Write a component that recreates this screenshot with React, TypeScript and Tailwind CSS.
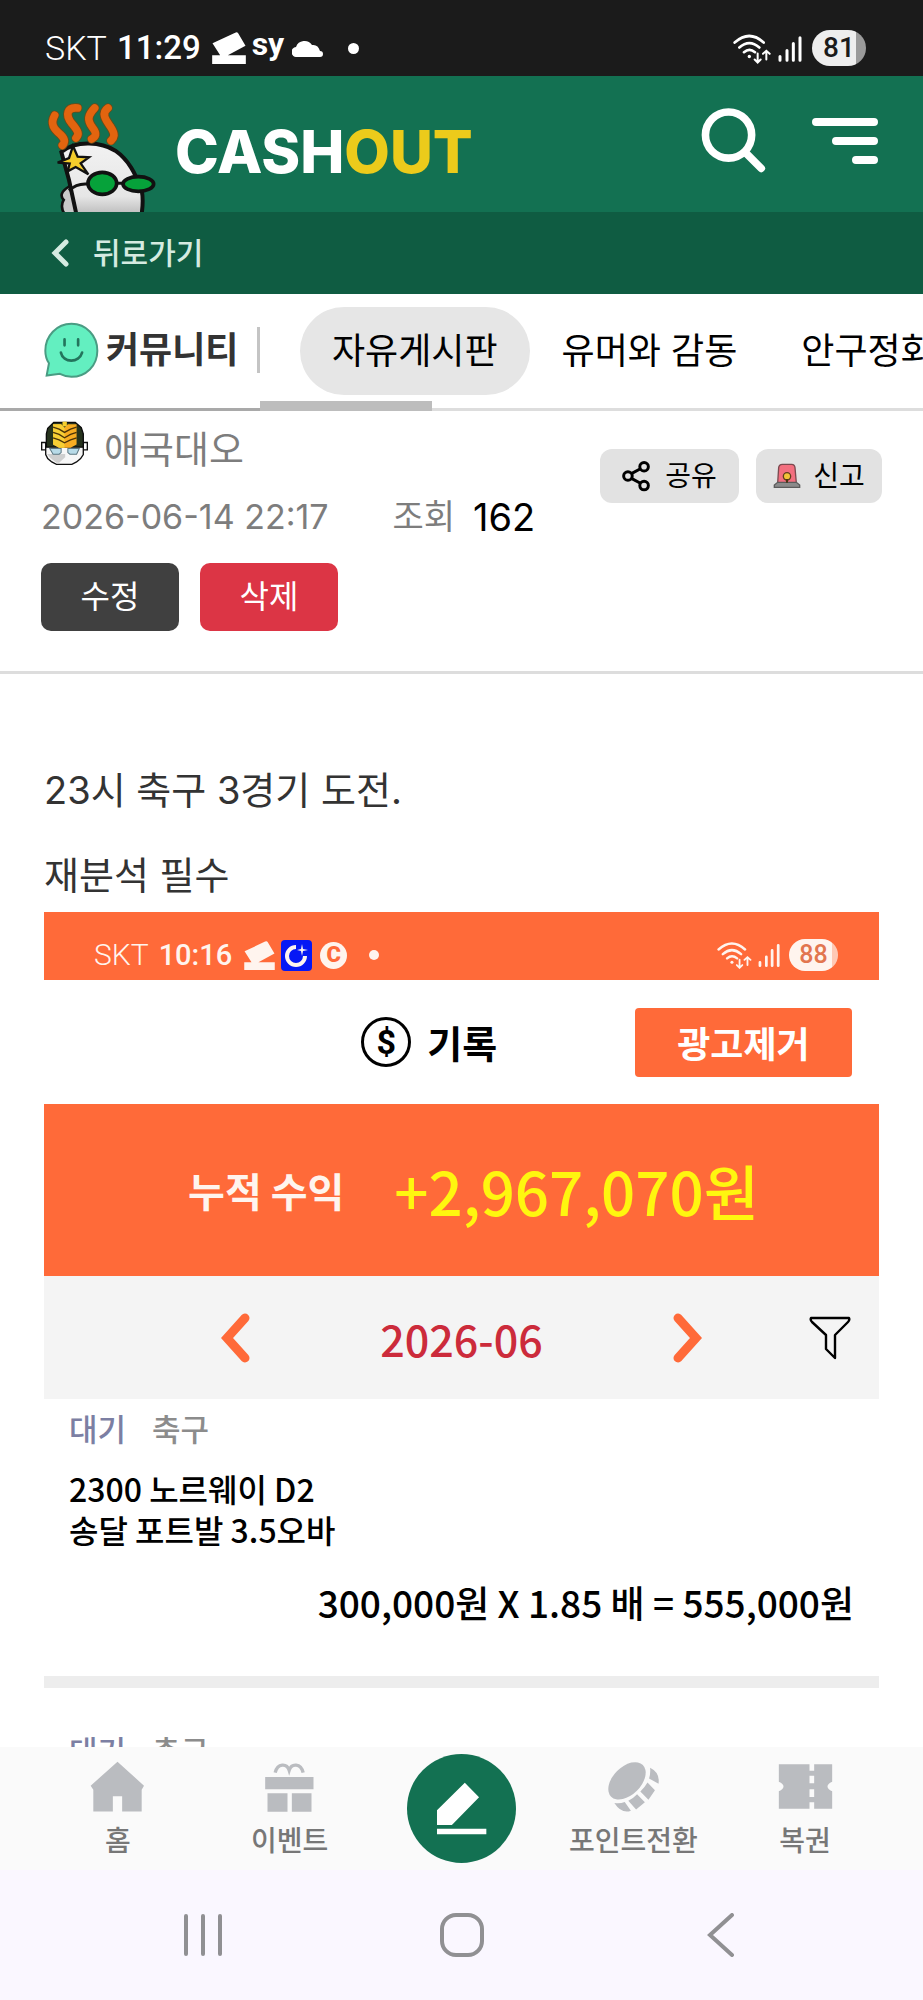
import type { ReactNode } from "react";
import { clsx } from "clsx";

const boards = ["자유게시판", "유머와 감동", "안구정화"];

const records = [
  {
    id: 1,
    status: "대기",
    sport: "축구",
    lines: ["2300 노르웨이 D2", "송달 포트발 3.5오바"],
    result: "300,000원 X 1.85 배 = 555,000원"
  },
  { id: 2, status: "대기", sport: "축구", lines: [], result: "" }
];

function CardIcon({ className }: { className?: string }) {
  return (
    <svg viewBox="636 96 101 96" className={className} fill="currentColor" aria-hidden="true">
      <path d="M637 130 L705 98 Q711 95 714 100 L736 137 L683 166 H737 V192 H636 V166 H660 Z" />
    </svg>
  );
}

function SignalIcons({ className }: { className?: string }) {
  return (
    <svg viewBox="760 95 210 92" className={className} fill="none" stroke="currentColor" strokeLinecap="round" aria-hidden="true">
      <path d="M765 123 Q809 84 852 123 M779 138 Q809 112 839 138 M793 152 Q809 138 826 152" strokeWidth="8" />
      <circle cx="809" cy="165" r="5" fill="currentColor" stroke="none" />
      <path d="M834 156 V181 M825 174 L834 183 L843 174 M860 174 V150 M850 157 L860 148 L870 157" strokeWidth="6" />
      <path d="M901 165 V176 M922 147 V176 M941 126 V176 M961 109 V176" strokeWidth="9" />
    </svg>
  );
}

function Mascot() {
  return (
    <svg viewBox="134 300 342 336" className="h-[112px] w-[114px]" aria-hidden="true">
      <defs>
        <linearGradient id="face" x1="0" y1="0" x2="0" y2="1">
          <stop offset="0" stopColor="#f2f2f2" />
          <stop offset="0.75" stopColor="#e6e6e6" />
          <stop offset="1" stopColor="#bdbdbd" />
        </linearGradient>
      </defs>
      <path d="M206 560 C180 575 180 590 190 600 C182 612 184 630 192 640 H240 L226 560 Z" fill="#c9c9c9" stroke="#111" strokeWidth="8" />
      <path d="M183 456 C230 418 305 428 345 452 C385 480 405 520 424 570 Q430 600 424 642 H228 L206 540 Z" fill="url(#face)" stroke="#111" strokeWidth="12" />
      {[
        "M163 346 C148 372 162 388 180 403 C196 418 194 428 186 436",
        "M232 324 C200 320 194 345 214 370 C236 396 237 403 227 414",
        "M283 324 C262 346 260 360 276 382 C292 402 286 410 274 417",
        "M323 324 C300 340 318 362 331 381 C346 404 342 412 332 422"
      ].map((d) => (
        <g key={d} fill="none" strokeLinecap="round">
          <path d={d} stroke="#6b4a17" strokeWidth="28" />
          <path d={d} stroke="#e2640f" strokeWidth="23" />
        </g>
      ))}
      <path d="M218 438 L232 470 L266 472 L241 490 L264 523 L226 501 L202 514 L208 491 L172 488 L206 474 Z" fill="#f4cd2c" stroke="#111" strokeWidth="7" />
      <path d="M262 552 C240 550 222 556 206 572 M350 550 H368" fill="none" stroke="#111" strokeWidth="9" />
      <ellipse cx="306" cy="550" rx="43" ry="33" fill="#06a23a" stroke="#111" strokeWidth="11" />
      <ellipse cx="414" cy="552" rx="46" ry="22" fill="#06a23a" stroke="#111" strokeWidth="11" />
    </svg>
  );
}

function SmileBubble() {
  return (
    <svg viewBox="130 98 166 168" className="h-14 w-[55px] shrink-0" aria-hidden="true">
      <path d="M213 103 C258 103 291 140 291 184 C291 230 256 263 213 263 C200 263 188 259 178 254 L138 259 L145 222 C137 210 134 197 134 184 C134 140 168 103 213 103 Z" fill="#63efc0" stroke="#4a9c83" strokeWidth="6" />
      <path d="M192 150 V168 M233 150 V168 M181 190 C188 222 236 222 245 190" fill="none" stroke="#23745c" strokeWidth="8" strokeLinecap="round" />
    </svg>
  );
}

function Avatar() {
  return (
    <svg viewBox="122 392 140 134" className="mt-[2px] h-[45px] w-[47px] self-start" aria-hidden="true">
      <path d="M124 456 H136 V478 H124 Z M248 456 H260 V478 H248 Z" fill="#fff" stroke="#111" strokeWidth="4" />
      <path d="M136 466 H248 V492 L240 504 L228 514 L214 521 H168 L154 514 L142 504 L136 492 Z" fill="#f7f7f7" stroke="#111" strokeWidth="4" />
      <path d="M140 490 H194 V500 L176 516 H168 L150 502 Z" fill="#cfcfcf" />
      <path d="M138 470 V430 L142 414 L160 396 H224 L242 412 L248 430 V470 Z" fill="#26331d" stroke="#0b0b0b" strokeWidth="4" />
      <path d="M158 402 H182 L192 412 L202 402 H228 V462 L210 472 H176 L158 462 Z" fill="#f8ad22" />
      <path d="M158 402 H182 L192 412 V472 H176 L158 462 Z" fill="#f7cf35" />
      <path d="M158 410 L176 416 L192 426 L210 416 L228 410 M158 426 L176 432 L192 442 L210 432 L228 426 M158 442 L176 448 L192 457 L210 448 L228 442" fill="none" stroke="#4b3308" strokeWidth="4" />
      <path d="M186 394 H199 V408 H186 Z" fill="#f6cf2e" />
      <path d="M148 474 H182 V486 L176 491 H158 Z M202 474 H236 L228 491 H208 L202 486 Z" fill="#b8dbe8" stroke="#5d7883" strokeWidth="3" />
    </svg>
  );
}

function ShareIcon() {
  return (
    <svg viewBox="430 510 88 96" className="h-8 w-[29px]" fill="none" stroke="currentColor" strokeWidth="9" aria-hidden="true">
      <path d="M460 550 L486 536 M460 566 L486 580" />
      <circle cx="448" cy="558" r="13" />
      <circle cx="497" cy="530" r="13" />
      <circle cx="497" cy="587" r="13" />
    </svg>
  );
}

function SirenIcon() {
  return (
    <svg viewBox="876 518 84 78" className="h-[26px] w-7" aria-hidden="true">
      <path d="M890 578 L893 532 Q894 522 904 522 H932 Q941 522 942 532 L946 578 Z" fill="#f36f7f" stroke="#7b4a50" strokeWidth="4" />
      <path d="M880 591 V584 L890 576 H946 L956 584 V591 Z" fill="#8b8b8b" stroke="#5c5c5c" strokeWidth="4" />
      <circle cx="918" cy="558" r="11" fill="#f3c338" stroke="#5f3f1b" strokeWidth="4" />
      <path d="M918 566 V577" stroke="#4a3414" strokeWidth="6" />
    </svg>
  );
}

function Battery({ level, className }: { level: number; className: string }) {
  return (
    <span className={clsx("flex items-center justify-center rounded-full font-medium", className)}>{level}</span>
  );
}

function Chevron({ flip, className }: { flip?: boolean; className?: string }) {
  return (
    <svg viewBox="0 0 29 50" className={className} fill="none" stroke="currentColor" strokeWidth="9" strokeLinecap="round" aria-hidden="true">
      <path d={flip ? "M5 5 L23 25 L5 45" : "M24 5 L6 25 L24 45"} strokeLinejoin="miter" />
    </svg>
  );
}

function NavItem({ label, children }: { label: string; children: ReactNode }) {
  return (
    <a href="#" className="flex flex-col items-center pt-[14px] text-[28px] leading-10 font-medium text-[#777777]">
      <span className="mb-2 text-[#babcc0]">{children}</span>
      {label}
    </a>
  );
}

function PostedCapture() {
  return (
    <figure className="bg-white font-['Noto_Sans_CJK_KR',sans-serif]">
      <div className="flex h-[68px] items-center bg-[#ff6a39] pt-[18px] pr-[41px] pl-[50px] font-[Roboto,sans-serif] text-[30px] leading-8 text-[#fff4ee]">
        <span className="font-light">SKT</span>
        <span className="ml-[10px] text-[29px] font-medium">10:16</span>
        <CardIcon className="ml-3 h-[29px] w-[31px]" />
        <svg viewBox="0 0 31 31" className="ml-[6px] size-[31px]" fill="none" aria-hidden="true">
          <rect width="31" height="31" rx="4" fill="#0618f5" />
          <path d="M15 7 A9 9 0 1 0 24 16" stroke="currentColor" strokeWidth="4" />
          <path d="M21 4 L22 9 L27 10 L22 11 L21 16 L20 11 L16 10 L20 9 Z" fill="currentColor" />
        </svg>
        <span className="ml-2 flex size-[27px] items-center justify-center rounded-full bg-[#fff4ee] text-[22px] leading-6 font-black text-[#ff6a39]">
          C
        </span>
        <span className="ml-[22px] size-[10px] rounded-full bg-[#fff4ee]" />
        <SignalIcons className="ml-auto h-7 w-16" />
        <Battery
          level={88}
          className="ml-2 h-8 w-[49px] bg-[linear-gradient(to_right,#fff4ee_88%,#ffc9b5_88%)] text-[25px] text-[#e2764f]"
        />
      </div>

      <div className="flex h-[124px] items-center pr-[27px] pl-[38%]">
        <span className="flex size-[50px] items-center justify-center rounded-full border-3 border-black font-[Roboto,sans-serif] text-[34px] leading-9 font-bold text-black">
          $
        </span>
        <h2 className="ml-4 text-[38px] leading-10 font-bold text-black">기록</h2>
        <button type="button" className="ml-auto h-[69px] w-[217px] rounded bg-[#ff6a39] text-[36px] leading-10 font-bold text-white">
          광고제거
        </button>
      </div>

      <div className="flex h-[172px] items-center justify-center gap-[50px] bg-[#ff6a39] pl-6">
        <span className="text-[40px] leading-12 font-bold text-[#fff4ee]">누적 수익</span>
        <strong className="text-[60px] leading-[72px] font-medium text-[#fff60f]">+2,967,070원</strong>
      </div>

      <div className="grid h-[123px] grid-cols-[1fr_auto_1fr] items-center bg-[#f4f4f4] pr-7">
        <div className="col-start-2 flex items-center gap-[130px] pl-7">
          <button type="button" aria-label="이전 달" className="text-[#ff6a39]">
            <Chevron className="h-[50px] w-[29px]" />
          </button>
          <span className="text-[43px] leading-12 font-medium text-[#cc2b3b]">2026-06</span>
          <button type="button" aria-label="다음 달" className="text-[#ff6a39]">
            <Chevron flip className="h-[50px] w-[29px]" />
          </button>
        </div>
        <button type="button" aria-label="필터" className="justify-self-end text-black">
          <svg viewBox="0 0 42 44" className="h-11 w-[42px]" fill="none" stroke="currentColor" strokeWidth="2.4" strokeLinejoin="round">
            <path d="M2 2 H40 Q41 4 39 6 L26 19 V42 L17 33 V19 L3 6 Q1 4 2 2 Z" />
          </svg>
        </button>
      </div>

      <ul>
        {records.map((record, i) => (
          <li key={record.id} className={clsx("px-[25px]", i === 0 ? "pt-[9px]" : "border-t-12 border-[#ededed] pt-[42px]")}>
            <p className="flex gap-[26px] text-[31px] leading-10 font-medium">
              <span className="text-[#7c7fa3]">{record.status}</span>
              <span className="text-[#8c8c8c]">{record.sport}</span>
            </p>
            <p className="mt-5 text-[32px] leading-[41px] font-medium text-black">
              {record.lines.map((line) => (
                <span key={line} className="block">
                  {line}
                </span>
              ))}
            </p>
            <p className="mt-[30px] pb-[52px] text-right text-[37px] leading-11 font-medium text-black">{record.result}</p>
          </li>
        ))}
      </ul>
    </figure>
  );
}

export default function App() {
  return (
    <div className="flex h-screen flex-col overflow-hidden bg-white font-[Inter,'Noto_Sans_CJK_KR',sans-serif]">
      {/* Phone status bar */}
      <div className="flex h-[76px] shrink-0 items-center bg-[#1b1b1b] pt-5 pr-[57px] pl-[45px] font-[Roboto,sans-serif] text-[34px] leading-9 text-white">
        <span className="font-light">SKT</span>
        <span className="ml-[10px] text-[33px] font-medium">11:29</span>
        <CardIcon className="ml-[11px] h-8 w-[34px]" />
        <span className="ml-[6px] pb-2 text-[32px] font-bold">sy</span>
        <svg viewBox="0 0 32 18" className="ml-2 h-[18px] w-8" fill="currentColor" aria-hidden="true">
          <path d="M5 18 A5 5 0 0 1 4 8 A9 9 0 0 1 20 6 Q26 5 28 12 A3 3 0 0 1 28 18 Z" />
        </svg>
        <span className="ml-6 size-[11px] rounded-full bg-white" />
        <SignalIcons className="ml-auto h-[31px] w-[70px]" />
        <Battery
          level={81}
          className="ml-[9px] h-9 w-[54px] bg-[linear-gradient(to_right,#eeeeee_81%,#9a9a9a_81%)] text-[28px] text-[#1b1b1b]"
        />
      </div>

      <header className="shrink-0">
        <div className="flex h-[136px] items-center bg-[#137152] pr-[45px] pl-[45px]">
          <a href="#" className="flex items-end self-end">
            <Mascot />
            <span className="ml-4 pb-[25px] text-[59px] leading-[70px] font-extrabold text-white">
              CASH<span className="text-[#eccb1b]">OUT</span>
            </span>
          </a>
          <div className="ml-auto flex items-center gap-[46px] pb-2 text-white">
            <button type="button" aria-label="검색">
              <svg viewBox="658 322 196 200" className="h-[66px] w-[65px]" fill="none" stroke="currentColor" strokeWidth="23" strokeLinecap="round">
                <circle cx="741" cy="407" r="70" />
                <path d="M792 460 L840 508" />
              </svg>
            </button>
            <button type="button" aria-label="메뉴">
              <svg viewBox="0 0 66 47" className="h-[47px] w-[66px]" stroke="currentColor" strokeWidth="8" strokeLinecap="round">
                <path d="M4 5 H62 M24 24 H62 M44 43 H62" />
              </svg>
            </button>
          </div>
        </div>
        <a href="#" className="flex h-[82px] items-center bg-[#0f5c42] pl-[51px] text-[30px] leading-10 font-medium text-[#d5ebe1]">
          <svg viewBox="0 0 18 28" className="h-7 w-[18px]" fill="none" stroke="currentColor" strokeWidth="5" strokeLinecap="round" aria-hidden="true">
            <path d="M15 3 L4 14 L15 25" />
          </svg>
          <span className="ml-6">뒤로가기</span>
        </a>
      </header>

      <nav className="relative flex h-[117px] shrink-0">
        <div className="flex w-[260px] shrink-0 items-center justify-between border-b-3 border-[#a9a9a9] pb-[2px] pl-11">
          <div className="flex items-center gap-[7px]">
            <SmileBubble />
            <h1 className="text-[36px] leading-10 font-bold whitespace-nowrap text-[#333333]">커뮤니티</h1>
          </div>
          <span className="h-[46px] w-[3px] bg-[#c4c4c4]" />
        </div>
        <div className="flex min-w-0 flex-1 items-center overflow-hidden border-b-3 border-[#dddddd] pl-10">
          {boards.map((board, i) => (
            <a
              key={board}
              href="#"
              className={clsx(
                "flex h-[88px] shrink-0 items-center rounded-full px-8 text-[36px] leading-10 text-black",
                i === 0 && "bg-[#e6e6e6]"
              )}
            >
              {board}
            </a>
          ))}
        </div>
        {/* Horizontal scroll thumb */}
        <span className="absolute bottom-0 left-[260px] h-[10px] w-[172px] bg-[#bdbdbd]" />
      </nav>

      <main className="min-h-0 flex-1 overflow-y-auto [scrollbar-width:none]">
        <article>
          <header className="flex items-start justify-between border-b-3 border-[#dddddd] px-[41px] pt-2 pb-10">
            <div>
              <div className="flex h-[60px] items-center gap-4 text-[38px] leading-10 text-[#7d7d7d]">
                <Avatar />
                애국대오
              </div>
              <div className="mt-2 flex h-[60px] items-center text-[34px] leading-10 whitespace-nowrap text-[#7d7d7d]">
                <time dateTime="2026-06-14T22:17">2026-06-14 22:17</time>
                <span className="ml-16">조회</span>
                <span className="ml-[18px] text-[38px] text-black">162</span>
              </div>
              <div className="mt-4 flex gap-[21px] text-[32px] leading-10 text-white">
                <button type="button" className="h-[68px] w-[138px] rounded-[10px] bg-[#404040]">
                  수정
                </button>
                <button type="button" className="h-[68px] w-[138px] rounded-[10px] bg-[#dc3545]">
                  삭제
                </button>
              </div>
            </div>
            <div className="flex gap-[17px] pt-[30px] text-[28px] leading-9 text-black">
              <button type="button" className="flex h-[54px] w-[139px] items-center justify-center gap-[14px] rounded-xl bg-[#e2e2e2]">
                <ShareIcon />
                공유
              </button>
              <button type="button" className="flex h-[54px] w-[126px] items-center justify-center gap-3 rounded-xl bg-[#e2e2e2]">
                <SirenIcon />
                신고
              </button>
            </div>
          </header>

          <div className="px-11 pt-[79px] text-[38px] leading-[74px] text-[#333333]">
            <p>23시 축구 3경기 도전.</p>
            <p className="mt-[11px]">재분석 필수</p>
            <PostedCapture />
          </div>
        </article>
      </main>

      <nav className="grid h-[123px] shrink-0 grid-cols-5 bg-[#fafafa] px-8">
        <NavItem label="홈">
          <svg viewBox="272 122 166 156" className="h-[52px] w-[55px]" fill="currentColor">
            <path d="M355 124 L435 196 L428 208 V274 H369 V228 H341 V274 H282 V208 L274 196 Z" />
          </svg>
        </NavItem>
        <NavItem label="이벤트">
          <svg viewBox="790 122 164 156" className="h-[52px] w-[55px]" fill="currentColor">
            <path d="M799 170 H944 V207 H799 Z M806 219 H866 V274 H806 Z M879 219 H938 V274 H879 Z" />
            <path d="M829 157 C836 128 864 128 871 150 C878 128 906 128 913 157" fill="none" stroke="currentColor" strokeWidth="10" />
          </svg>
        </NavItem>
        <button type="button" aria-label="글쓰기" className="mt-[7px] flex size-[109px] items-center justify-center justify-self-center rounded-full bg-[#137152] text-white">
          <svg viewBox="1310 182 154 160" className="h-[53px] w-[51px]" fill="currentColor">
            <path d="M1397 184 L1440 228 L1358 312 H1313 V267 Z M1313 323 H1462 V340 H1313 Z" />
          </svg>
        </button>
        <NavItem label="포인트전환">
          <svg viewBox="442 124 164 160" className="h-[52px] w-[55px]" fill="currentColor">
            <ellipse cx="504" cy="185" rx="69" ry="43" transform="rotate(-45 504 185)" />
            <path d="M575 145 Q606 160 601 194 L572 178 Q577 160 575 145 Z M567 190 L590 214 L570 243 L545 218 Q558 206 567 190 Z M535 226 L559 251 L532 273 L508 246 Q522 240 535 226 Z M465 253 Q482 256 497 250 L516 277 Q488 288 465 253 Z" />
          </svg>
        </NavItem>
        <NavItem label="복권">
          <svg viewBox="949 126 164 156" className="h-[52px] w-[55px]" fill="currentColor" fillRule="evenodd">
            <path d="M951 136 H1043 V155 H1057 V136 H1111 V188 Q1097 194 1097 202 Q1097 211 1111 217 V269 H1057 V250 H1043 V269 H951 V217 Q965 211 965 202 Q965 194 951 188 Z M1043 170 V193 H1057 V170 Z M1043 211 V234 H1057 V211 Z" />
          </svg>
        </NavItem>
      </nav>

      {/* Android navigation keys */}
      <div className="grid h-[130px] shrink-0 grid-cols-3 items-center justify-items-center bg-[#faf7ff] px-[73px] text-[#909093]">
        <button type="button" aria-label="최근 앱">
          <svg viewBox="0 0 40 42" className="h-[42px] w-10" stroke="currentColor" strokeWidth="4" strokeLinecap="round">
            <path d="M3 2 V40 M20 2 V40 M37 2 V40" />
          </svg>
        </button>
        <button type="button" aria-label="홈 화면" className="size-11 rounded-2xl border-4 border-current" />
        <button type="button" aria-label="뒤로">
          <svg viewBox="0 0 28 44" className="h-11 w-7" fill="none" stroke="currentColor" strokeWidth="4" strokeLinecap="round">
            <path d="M25 2 L3 22 L25 42" />
          </svg>
        </button>
      </div>
    </div>
  );
}
